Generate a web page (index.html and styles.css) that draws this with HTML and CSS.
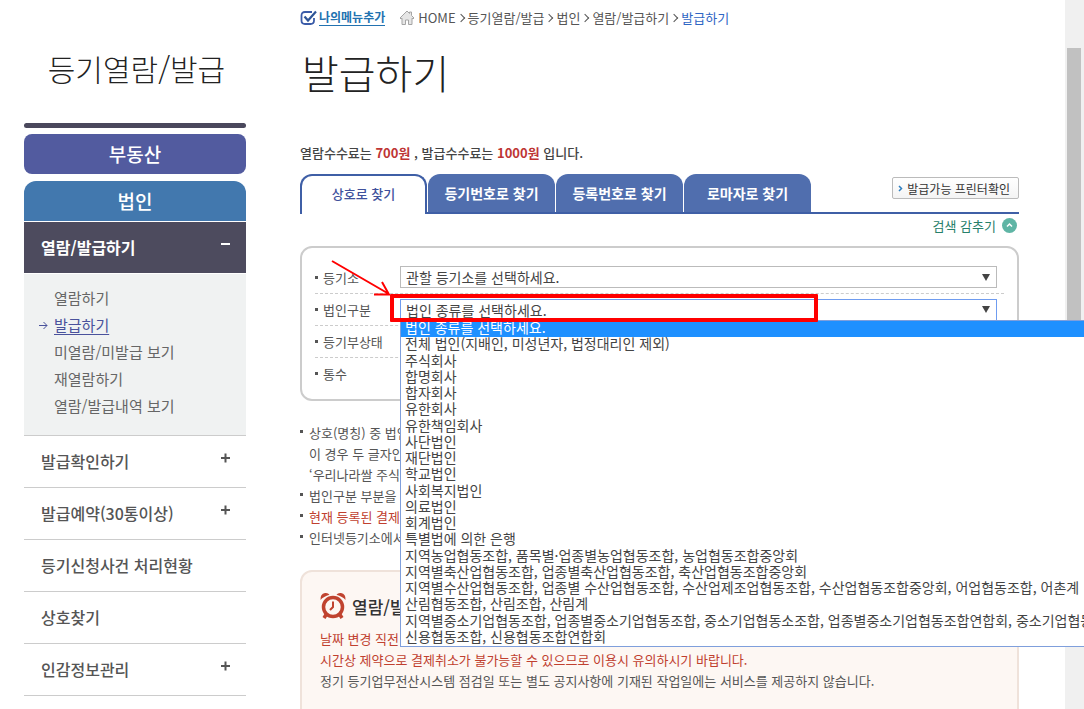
FILE: index.html
```html
<!DOCTYPE html>
<html lang="ko">
<head>
    <meta charset="UTF-8">
    <meta name="viewport" content="width=device-width, initial-scale=1.0">
    <title>발급하기</title>
    <link rel="stylesheet" href="styles.css">
</head>
<body>
    <div class="page">
        <aside class="sidebar">
            <h2 class="sidebar-title">등기열람/발급</h2>
            <a class="category estate" href="#">부동산</a>
            <a class="category corp" href="#">법인</a>
            <ul class="menu">
                <li class="menu-open">
                    <a class="menu-link" href="#">열람/발급하기 <span class="sign minus"></span></a>
                    <ul class="submenu">
                        <li><a href="#">열람하기</a></li>
                        <li class="current">
                            <svg class="sub-arrow" viewBox="0 0 9 9"><path d="M0 4.500h8M4.500 1l3.500 3.500L4.500 8"/></svg>
                            <a href="#">발급하기</a>
                        </li>
                        <li><a href="#">미열람/미발급 보기</a></li>
                        <li><a href="#">재열람하기</a></li>
                        <li><a href="#">열람/발급내역 보기</a></li>
                    </ul>
                </li>
                <li><a class="menu-link" href="#">발급확인하기 <span class="sign plus"></span></a></li>
                <li><a class="menu-link" href="#">발급예약(30통이상) <span class="sign plus"></span></a></li>
                <li><a class="menu-link" href="#">등기신청사건 처리현황</a></li>
                <li><a class="menu-link" href="#">상호찾기</a></li>
                <li><a class="menu-link" href="#">인감정보관리 <span class="sign plus"></span></a></li>
            </ul>
        </aside>

        <main class="content">
            <nav class="breadcrumb">
                <a class="my-menu" href="#">
                    <svg class="check-icon" viewBox="0 0 17 16">
                        <path d="M12 2H5Q1.500 2 1.500 5.500v5Q1.500 14 5 14h5.500q3.500 0 3.500-3.500V8" fill="none" stroke="#3a5ba8" stroke-width="1.800"/>
                        <path d="M4.500 6.500L8 10.500L16 1.500" fill="none" stroke="#2f5597" stroke-width="2.200"/>
                    </svg>
                    <span>나의메뉴추가</span>
                </a>
                <svg class="home-icon" viewBox="0 0 16 16">
                    <path d="M1 8L8 1l2.500 2.500V2h2v3.500L15 8l-1 1-1-.8V14.500H9.500V10h-3v4.500H3V8.200L2 9z" fill="#e6e6e6" stroke="#a5a5a5"/>
                </svg>
                <ol class="crumbs">
                    <li><a href="#">HOME</a></li>
                    <li><a href="#">등기열람/발급</a></li>
                    <li><a href="#">법인</a></li>
                    <li><a href="#">열람/발급하기</a></li>
                    <li><a class="here" href="#">발급하기</a></li>
                </ol>
            </nav>

            <h1>발급하기</h1>
            <p class="fee">열람수수료는 <em>700원</em> , 발급수수료는 <em>1000원</em> 입니다.</p>

            <div class="tabs">
                <button type="button" class="tab active">상호로 찾기</button>
                <button type="button" class="tab">등기번호로 찾기</button>
                <button type="button" class="tab">등록번호로 찾기</button>
                <button type="button" class="tab">로마자로 찾기</button>
                <button type="button" class="printer">
                    <svg viewBox="0 0 5 7"><path d="M1 1l2.500 2.500L1 6"/></svg>발급가능 프린터확인
                </button>
            </div>

            <button type="button" class="toggle">검색 감추기
                <svg viewBox="0 0 15 15"><circle cx="7.500" cy="7.500" r="7.500" fill="#5fb5a5"/><path d="M5 8.500L7.500 6L10 8.500" fill="none" stroke="#fff" stroke-width="1.500"/></svg>
            </button>

            <form class="search">
                <div class="row">
                    <label for="office">등기소</label>
                    <select id="office"><option>관할 등기소를 선택하세요.</option></select>
                </div>
                <div class="row type-row">
                    <label for="type">법인구분</label>
                    <select id="type" class="focused"><option>법인 종류를 선택하세요.</option></select>
                    <!-- 법인 종류 목록 -->
                    <ul class="dropdown">
                        <li class="selected">법인 종류를 선택하세요.</li>
                        <li>전체 법인(지배인, 미성년자, 법정대리인 제외)</li>
                        <li>주식회사</li>
                        <li>합명회사</li>
                        <li>합자회사</li>
                        <li>유한회사</li>
                        <li>유한책임회사</li>
                        <li>사단법인</li>
                        <li>재단법인</li>
                        <li>학교법인</li>
                        <li>사회복지법인</li>
                        <li>의료법인</li>
                        <li>회계법인</li>
                        <li>특별법에 의한 은행</li>
                        <li>지역농업협동조합, 품목별·업종별농업협동조합, 농업협동조합중앙회</li>
                        <li>지역별축산업협동조합, 업종별축산업협동조합, 축산업협동조합중앙회</li>
                        <li>지역별수산업협동조합, 업종별 수산업협동조합, 수산업제조업협동조합, 수산업협동조합중앙회, 어업협동조합, 어촌계</li>
                        <li>산림협동조합, 산림조합, 산림계</li>
                        <li>지역별중소기업협동조합, 업종별중소기업협동조합, 중소기업협동소조합, 업종별중소기업협동조합연합회, 중소기업협동</li>
                        <li>신용협동조합, 신용협동조합연합회</li>
                    </ul>
                    <!-- 강조 표시 -->
                    <div class="highlight"></div>
                    <svg class="arrow" viewBox="0 0 62 40"><path d="M2 2L59 35M52 23L59 35.500L44 35.500"/></svg>
                </div>
                <div class="row"><span class="label">등기부상태</span></div>
                <div class="row"><span class="label">통수</span></div>
            </form>

            <ul class="notes">
                <li>상호(명칭) 중 법인<br>이 경우 두 글자인<br>‘우리나라쌀 주식회</li>
                <li>법인구분 부분을 포</li>
                <li class="warn">현재 등록된 결제대</li>
                <li>인터넷등기소에서</li>
            </ul>

            <section class="notice">
                <h3>
                    <svg class="clock" viewBox="0 0 26 28">
                        <g fill="none" stroke="#c0432f">
                            <circle cx="13" cy="15" r="9.500" stroke-width="3.500"/>
                            <path d="M13 9.500V15l-3 3" stroke-width="2"/>
                            <path d="M6.500 22L4 26M19.500 22l2.500 4" stroke-width="3.500"/>
                        </g>
                        <path d="M.500 8Q0 2 5 1q3-.500 4.500 1.800Q3.500 4.500.500 8zM25.500 8Q26 2 21 1q-3-.500-4.500 1.800Q22.500 4.500 25.500 8z" fill="#c0432f"/>
                    </svg>
                    열람/발급
                </h3>
                <p class="warn">날짜 변경 직전</p>
                <p class="warn">시간상 제약으로 결제취소가 불가능할 수 있으므로 이용시 유의하시기 바랍니다.</p>
                <p>정기 등기업무전산시스템 점검일 또는 별도 공지사항에 기재된 작업일에는 서비스를 제공하지 않습니다.</p>
            </section>
        </main>

        <div class="scrollbar"><div class="thumb"></div></div>
    </div>
</body>
</html>
```

FILE: styles.css
```css
* {
    box-sizing: border-box;
}
body {
    margin: 0;
    background: #fff;
    color: #555;
    font-family: "Noto Sans CJK KR", "Noto Sans", sans-serif;
    font-size: 13px;
    line-height: 21px;
}
h1, h2, h3, p, ul, ol {
    margin: 0;
    padding: 0;
}
ul, ol {
    list-style: none;
}
a {
    color: inherit;
    text-decoration: none;
}
button, select {
    font-family: inherit;
    cursor: pointer;
}
.page {
    display: flex;
    height: 100vh;
    overflow: hidden;
    padding-left: 24px;
}

/* 왼쪽 메뉴 */
.sidebar {
    flex: none;
    width: 222px;
    padding-top: 48px;
}
.sidebar-title {
    position: relative;
    padding: 0 0 35px 3px;
    text-align: center;
    font-size: 30px;
    font-weight: 300;
    line-height: 40px;
    color: #222;
}
.sidebar-title::after {
    content: "";
    position: absolute;
    left: 0;
    right: 0;
    bottom: -5px;
    height: 5px;
    border-radius: 3px;
    background: #4a485c;
}
.category {
    display: block;
    height: 40px;
    text-align: center;
    font-size: 19px;
    font-weight: 500;
    line-height: 40px;
    color: #fff;
}
.estate {
    margin-top: 11px;
    border-radius: 8px;
    background: #525b9f;
}
.corp {
    margin-top: 7px;
    border-radius: 12px 12px 0 0;
    background: #4278ae;
}
.menu > li {
    border-bottom: 1px solid #ccc;
}
.menu-link {
    display: flex;
    justify-content: space-between;
    height: 51px;
    padding: 0 15px 0 17px;
    font-size: 16px;
    font-weight: 500;
    line-height: 51px;
    color: #555;
}
.menu-open > .menu-link {
    margin-top: 1px;
    background: #4d4b5e;
    font-weight: 700;
    color: #fff;
}
.sign {
    position: relative;
    width: 10px;
    height: 44px;
}
.sign::before, .sign.plus::after {
    content: "";
    position: absolute;
    top: 21px;
    left: 0;
    width: 9px;
    height: 2px;
    background: currentColor;
}
.sign.plus::after {
    transform: rotate(90deg);
}
.submenu {
    margin-top: 1px;
    padding: 10px 0 16px 30px;
    background: #f0f2f2;
    font-size: 15px;
    line-height: 27px;
    color: #666;
}
.submenu .current {
    position: relative;
    color: #4a529c;
}
.submenu .current a {
    text-decoration: underline;
    text-underline-offset: 3px;
}
.sub-arrow {
    position: absolute;
    left: -15px;
    top: 10px;
    width: 9px;
    height: 9px;
    fill: none;
    stroke: #4a529c;
}

/* 본문 */
.content {
    flex: 1;
    min-width: 0;
    margin: 0 46px 0 54px;
    padding-top: 7px;
}
.breadcrumb {
    display: flex;
    align-items: center;
    height: 21px;
}
.my-menu {
    display: flex;
    align-items: center;
    gap: 2px;
    margin-right: 14px;
    font-size: 12px;
    font-weight: 700;
    line-height: 16px;
    color: #2272b0;
}
.my-menu span {
    border-bottom: 1px solid #2272b0;
}
.check-icon {
    width: 17px;
    height: 16px;
}
.home-icon {
    width: 16px;
    height: 16px;
    margin-right: 3px;
}
.crumbs {
    display: flex;
}
.crumbs li + li::before {
    content: "";
    display: inline-block;
    width: 5px;
    height: 5px;
    margin: 0 4px 2px 2px;
    border: solid #555;
    border-width: 1px 1px 0 0;
    transform: rotate(45deg);
}
.crumbs .here {
    color: #2f66c4;
}
h1 {
    margin: 13px 0 39px 2px;
    font-size: 40px;
    font-weight: 300;
    line-height: 62px;
    color: #222;
}
.fee {
    font-weight: 500;
    color: #444;
}
.fee em {
    font-style: normal;
    font-weight: 700;
    color: #be3535;
}
.tabs {
    display: flex;
    gap: 1px;
    height: 40px;
    margin-top: 11px;
    border-bottom: 2px solid #3f5fa6;
}
.tab {
    width: 127px;
    padding: 0;
    border: 0;
    border-radius: 12px 12px 0 0;
    background: #506eae;
    font-size: 14px;
    font-weight: 700;
    color: #fff;
}
.tab.active {
    height: 40px;
    padding-bottom: 4px;
    border: 2px solid #3f5fa6;
    border-bottom: 0;
    background: #fff;
    font-size: 13px;
    font-weight: 500;
    color: #3f519c;
}
.printer {
    display: flex;
    align-items: center;
    gap: 4px;
    height: 22px;
    margin: 3px 0 0 auto;
    padding: 0 8px 0 5px;
    border: 1px solid #bbb;
    border-radius: 2px;
    background: linear-gradient(#fff, #f4f4f4);
    font-size: 12px;
    color: #333;
}
.printer svg {
    width: 5px;
    height: 7px;
    fill: none;
    stroke: #2f7fc0;
    stroke-width: 1.5;
}
.toggle {
    display: flex;
    align-items: center;
    gap: 6px;
    margin: 1px 2px 10px auto;
    padding: 0;
    border: 0;
    background: none;
    font-size: 13px;
    line-height: 21px;
    color: #27806a;
}
.toggle svg {
    width: 15px;
    height: 15px;
}

/* 검색 조건 */
.search {
    padding: 13px 13px 10px;
    border: 2px solid #ccc;
    border-radius: 12px;
}
.row {
    display: flex;
    align-items: center;
    height: 32px;
}
.row + .row {
    border-top: 1px dashed #ccc;
}
.row label, .row .label {
    display: flex;
    align-items: center;
    gap: 5px;
    width: 85px;
}
.row label::before, .row .label::before {
    content: "";
    width: 3px;
    height: 3px;
    background: #555;
}
.row select {
    flex: 1;
    height: 22px;
    margin-right: 7px;
    padding: 0 5px;
    border: 1px solid #bbb;
    border-radius: 0;
    appearance: none;
    background: #fff;
    font-size: 14px;
    line-height: 20px;
    color: #444;
}
/* 선택 상자 화살표 */
.row:has(select)::after {
    content: "";
    z-index: 1;
    width: 0;
    height: 0;
    margin-left: -22px;
    margin-right: 14px;
    border: 4px solid transparent;
    border-top: 7px solid #444;
    border-bottom: 0;
    pointer-events: none;
}
.row select.focused {
    border-color: #6f9cf0;
    outline: 0;
}
.type-row {
    position: relative;
}
.dropdown {
    position: absolute;
    z-index: 1;
    top: 26px;
    left: 85px;
    display: grid;
    grid-auto-rows: 1fr;
    width: 700px;
    height: 327px;
    border: 1px solid #7f9fdc;
    background: #fff;
    font-size: 14px;
    line-height: 13px;
    color: #444;
    white-space: nowrap;
}
.dropdown li {
    padding-left: 4px;
}
.dropdown .selected {
    background: #1e90ff;
    color: #fff;
}
.highlight {
    position: absolute;
    z-index: 2;
    top: 0;
    left: 75px;
    width: 428px;
    height: 28px;
    border: 4px solid #f00;
    border-radius: 1px;
}
.arrow {
    position: absolute;
    z-index: 2;
    top: -35px;
    left: 15px;
    width: 62px;
    height: 40px;
    fill: none;
    stroke: #f00;
    stroke-width: 2;
}

/* 안내문 */
.notes {
    margin-top: 21px;
}
.notes li {
    position: relative;
    padding-left: 9px;
}
.notes li::before {
    content: "";
    position: absolute;
    top: 8px;
    left: 0;
    width: 3px;
    height: 3px;
    background: #555;
}
.warn {
    color: #c0402f;
}
.notice {
    margin-top: 22px;
    padding: 20px 18px 40px;
    border: 2px solid #efe2da;
    border-radius: 12px;
    background: #fdf7f3;
}
.notice h3 {
    display: flex;
    align-items: center;
    gap: 6px;
    height: 28px;
    margin-bottom: 8px;
    font-size: 17px;
    font-weight: 500;
    color: #333;
}
.clock {
    width: 26px;
    height: 28px;
}

/* 스크롤바 */
.scrollbar {
    flex: none;
    width: 19px;
    padding: 48px 3px 0 2px;
    background: #f0f0f0;
}
.thumb {
    height: 430px;
    background: #c1c1c1;
}
```
